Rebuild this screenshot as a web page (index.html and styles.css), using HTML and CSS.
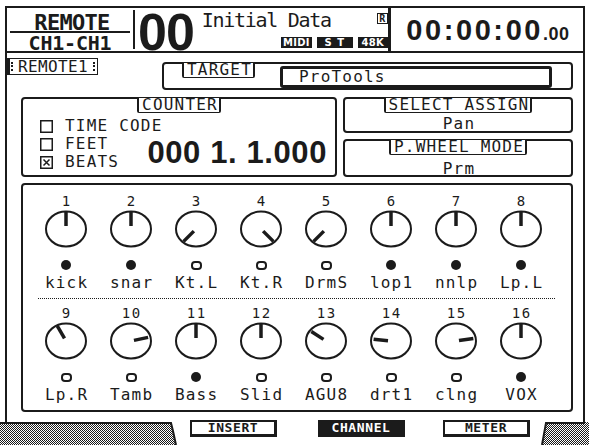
FILE: index.html
```html
<!DOCTYPE html>
<html lang="en">
<head>
<meta charset="utf-8">
<title>Remote – ProTools</title>
<link rel="stylesheet" href="styles.css">
</head>
<body>
<div class="screen">
  <header class="hdr">
    <div class="chsel">
      <div class="chsel-mode">REMOTE</div>
      <div class="chsel-range">CH1-CH1</div>
    </div>
    <div class="hdr-rule"></div>
    <div class="scene-num">00</div>
    <div class="scene-info">
      <div class="scene-line">
        <span class="scene-title">Initial Data</span>
        <span class="flag-r">R</span>
      </div>
      <div class="status">
        <span class="pill">MIDI</span>
        <span class="pill">S T</span>
        <span class="pill">48K</span>
      </div>
    </div>
    <div class="hdr-rule thick"></div>
    <div class="timecode">00:00:00<span class="frames">.00</span></div>
  </header>

  <main class="body">
    <div class="row-a">
      <div class="page-tag">REMOTE1</div>
      <section class="grp target">
        <span class="tag">TARGET</span>
        <div class="field">ProTools</div>
      </section>
    </div>

    <div class="row-b">
      <section class="grp counter">
        <span class="tag center">COUNTER</span>
        <div class="counter-body">
          <ul class="modes">
            <li><svg class="cb" viewBox="0 0 13 13" width="13" height="13"><rect x="0.75" y="0.75" width="11.5" height="11.5"/></svg>TIME CODE</li>
            <li><svg class="cb" viewBox="0 0 13 13" width="13" height="13"><rect x="0.75" y="0.75" width="11.5" height="11.5"/></svg>FEET</li>
            <li><svg class="cb" viewBox="0 0 13 13" width="13" height="13"><rect x="0.75" y="0.75" width="11.5" height="11.5"/><path d="M3.5 3.5 9.5 9.5M9.5 3.5 3.5 9.5"/></svg>BEATS</li>
          </ul>
          <div class="beats">000 1. 1.000</div>
        </div>
      </section>
      <div class="col-right">
        <section class="grp assign">
          <span class="tag center">SELECT ASSIGN</span>
          <div class="value">Pan</div>
        </section>
        <section class="grp wheel">
          <span class="tag center">P.WHEEL MODE</span>
          <div class="value">Prm</div>
        </section>
      </div>
    </div>

    <section class="grp channels">
      <div class="ch-row">
        <div class="ch"><div class="ch-num">1</div><svg class="knob" viewBox="0 0 44 40" width="44" height="40"><ellipse cx="22" cy="20" rx="20" ry="17.5"/><line x1="22" y1="17" x2="22" y2="2.5" transform="rotate(0 22 20)"/></svg><div class="ch-state"><span class="led"></span></div><div class="ch-name">kick</div></div>
        <div class="ch"><div class="ch-num">2</div><svg class="knob" viewBox="0 0 44 40" width="44" height="40"><ellipse cx="22" cy="20" rx="20" ry="17.5"/><line x1="22" y1="17" x2="22" y2="2.5" transform="rotate(0 22 20)"/></svg><div class="ch-state"><span class="led"></span></div><div class="ch-name">snar</div></div>
        <div class="ch"><div class="ch-num">3</div><svg class="knob" viewBox="0 0 44 40" width="44" height="40"><ellipse cx="22" cy="20" rx="20" ry="17.5"/><line x1="22" y1="17" x2="22" y2="2.5" transform="rotate(-135 22 20)"/></svg><div class="ch-state"><span class="led off"></span></div><div class="ch-name">Kt.L</div></div>
        <div class="ch"><div class="ch-num">4</div><svg class="knob" viewBox="0 0 44 40" width="44" height="40"><ellipse cx="22" cy="20" rx="20" ry="17.5"/><line x1="22" y1="17" x2="22" y2="2.5" transform="rotate(135 22 20)"/></svg><div class="ch-state"><span class="led off"></span></div><div class="ch-name">Kt.R</div></div>
        <div class="ch"><div class="ch-num">5</div><svg class="knob" viewBox="0 0 44 40" width="44" height="40"><ellipse cx="22" cy="20" rx="20" ry="17.5"/><line x1="22" y1="17" x2="22" y2="2.5" transform="rotate(-135 22 20)"/></svg><div class="ch-state"><span class="led off"></span></div><div class="ch-name">DrmS</div></div>
        <div class="ch"><div class="ch-num">6</div><svg class="knob" viewBox="0 0 44 40" width="44" height="40"><ellipse cx="22" cy="20" rx="20" ry="17.5"/><line x1="22" y1="17" x2="22" y2="2.5" transform="rotate(0 22 20)"/></svg><div class="ch-state"><span class="led"></span></div><div class="ch-name">lop1</div></div>
        <div class="ch"><div class="ch-num">7</div><svg class="knob" viewBox="0 0 44 40" width="44" height="40"><ellipse cx="22" cy="20" rx="20" ry="17.5"/><line x1="22" y1="17" x2="22" y2="2.5" transform="rotate(0 22 20)"/></svg><div class="ch-state"><span class="led"></span></div><div class="ch-name">nnlp</div></div>
        <div class="ch"><div class="ch-num">8</div><svg class="knob" viewBox="0 0 44 40" width="44" height="40"><ellipse cx="22" cy="20" rx="20" ry="17.5"/><line x1="22" y1="17" x2="22" y2="2.5" transform="rotate(0 22 20)"/></svg><div class="ch-state"><span class="led"></span></div><div class="ch-name">Lp.L</div></div>
      </div>
      <div class="ch-sep"></div>
      <div class="ch-row">
        <div class="ch"><div class="ch-num">9</div><svg class="knob" viewBox="0 0 44 40" width="44" height="40"><ellipse cx="22" cy="20" rx="20" ry="17.5"/><line x1="22" y1="17" x2="22" y2="2.5" transform="rotate(-30 22 20)"/></svg><div class="ch-state"><span class="led off"></span></div><div class="ch-name">Lp.R</div></div>
        <div class="ch"><div class="ch-num">10</div><svg class="knob" viewBox="0 0 44 40" width="44" height="40"><ellipse cx="22" cy="20" rx="20" ry="17.5"/><line x1="22" y1="17" x2="22" y2="2.5" transform="rotate(78 22 20)"/></svg><div class="ch-state"><span class="led off"></span></div><div class="ch-name">Tamb</div></div>
        <div class="ch"><div class="ch-num">11</div><svg class="knob" viewBox="0 0 44 40" width="44" height="40"><ellipse cx="22" cy="20" rx="20" ry="17.5"/><line x1="22" y1="17" x2="22" y2="2.5" transform="rotate(0 22 20)"/></svg><div class="ch-state"><span class="led"></span></div><div class="ch-name">Bass</div></div>
        <div class="ch"><div class="ch-num">12</div><svg class="knob" viewBox="0 0 44 40" width="44" height="40"><ellipse cx="22" cy="20" rx="20" ry="17.5"/><line x1="22" y1="17" x2="22" y2="2.5" transform="rotate(0 22 20)"/></svg><div class="ch-state"><span class="led off"></span></div><div class="ch-name">Slid</div></div>
        <div class="ch"><div class="ch-num">13</div><svg class="knob" viewBox="0 0 44 40" width="44" height="40"><ellipse cx="22" cy="20" rx="20" ry="17.5"/><line x1="22" y1="17" x2="22" y2="2.5" transform="rotate(-57 22 20)"/></svg><div class="ch-state"><span class="led off"></span></div><div class="ch-name">AGU8</div></div>
        <div class="ch"><div class="ch-num">14</div><svg class="knob" viewBox="0 0 44 40" width="44" height="40"><ellipse cx="22" cy="20" rx="20" ry="17.5"/><line x1="22" y1="17" x2="22" y2="2.5" transform="rotate(-84 22 20)"/></svg><div class="ch-state"><span class="led off"></span></div><div class="ch-name">drt1</div></div>
        <div class="ch"><div class="ch-num">15</div><svg class="knob" viewBox="0 0 44 40" width="44" height="40"><ellipse cx="22" cy="20" rx="20" ry="17.5"/><line x1="22" y1="17" x2="22" y2="2.5" transform="rotate(82 22 20)"/></svg><div class="ch-state"><span class="led off"></span></div><div class="ch-name">clng</div></div>
        <div class="ch"><div class="ch-num">16</div><svg class="knob" viewBox="0 0 44 40" width="44" height="40"><ellipse cx="22" cy="20" rx="20" ry="17.5"/><line x1="22" y1="17" x2="22" y2="2.5" transform="rotate(0 22 20)"/></svg><div class="ch-state"><span class="led"></span></div><div class="ch-name">VOX</div></div>
      </div>
    </section>
  </main>

  <footer class="tabs">
    <svg class="hatch hatch-l" viewBox="0 0 178 23" width="178" height="23">
      <defs>
        <pattern id="dots-l" width="2" height="2" patternUnits="userSpaceOnUse">
          <rect width="1" height="1" fill="#1b1b1b"/><rect x="1" y="1" width="1" height="1" fill="#1b1b1b"/>
        </pattern>
      </defs>
      <polygon points="0,0 171,0 173,9 176,23 0,23" fill="url(#dots-l)"/>
      <polyline points="0,1 171,1 173,9 176,23" fill="none" stroke="#1b1b1b" stroke-width="2"/>
    </svg>
    <div class="tab">INSERT</div>
    <div class="tab on">CHANNEL</div>
    <div class="tab">METER</div>
    <svg class="hatch hatch-r" viewBox="0 0 48 23" width="48" height="23">
      <defs>
        <pattern id="dots-r" width="2" height="2" patternUnits="userSpaceOnUse">
          <rect width="1" height="1" fill="#1b1b1b"/><rect x="1" y="1" width="1" height="1" fill="#1b1b1b"/>
        </pattern>
      </defs>
      <polygon points="5,0 48,0 48,23 1,23" fill="url(#dots-r)"/>
      <polyline points="1,23 5,1 44,1" fill="none" stroke="#1b1b1b" stroke-width="2"/>
    </svg>
  </footer>
</div>
</body>
</html>
```

FILE: styles.css
```css
* {
  box-sizing: border-box;
  margin: 0;
  padding: 0;
}

html,
body {
  width: 589px;
  height: 445px;
  overflow: hidden;
  background: #ffffff;
}

body {
  font-family: "DejaVu Sans Mono", monospace;
  color: #1b1b1b;
}

.screen {
  margin: 6px 0 0 5px;
  width: 580px;
  display: flex;
  flex-direction: column;
}

/* ---------- header bar ---------- */

.hdr {
  height: 47px;
  border: 2px solid #1b1b1b;
  display: flex;
}

.chsel {
  width: 126px;
  padding: 0 3px;
  display: flex;
  flex-direction: column;
}

.chsel-mode {
  height: 25px;
  border-bottom: 2px solid #1b1b1b;
  display: flex;
  align-items: flex-end;
  justify-content: center;
  font-weight: bold;
  font-size: 22px;
  line-height: 17px;
  letter-spacing: -0.7px;
  padding-left: 4px;
}

.chsel-range {
  height: 18px;
  display: flex;
  align-items: flex-end;
  justify-content: center;
  font-weight: bold;
  font-size: 20px;
  line-height: 15px;
  letter-spacing: -0.2px;
}

.hdr-rule {
  width: 2px;
  margin: 2px 0;
  background: #1b1b1b;
}

.hdr-rule.thick {
  width: 3px;
  margin: 0;
}

.scene-num {
  margin-left: 3px;
  height: 43px;
  font-family: "Liberation Sans", Arial, sans-serif;
  font-weight: bold;
  font-size: 52px;
  line-height: 48px;
  letter-spacing: -1px;
}

.scene-info {
  margin-left: 8px;
  width: 186px;
  display: flex;
  flex-direction: column;
}

.scene-line {
  height: 27px;
  display: flex;
  justify-content: space-between;
  align-items: flex-start;
}

.scene-title {
  font-size: 20px;
  line-height: 24px;
  letter-spacing: -1.3px;
}

.flag-r {
  margin-top: 5px;
  width: 11px;
  height: 11px;
  border: 1px solid #1b1b1b;
  font-size: 10px;
  line-height: 9px;
  font-weight: bold;
  text-align: center;
}

.status {
  display: flex;
  justify-content: flex-end;
  gap: 5px;
  margin-top: 2px;
}

.pill {
  height: 11px;
  padding: 0 2px;
  background: #1b1b1b;
  color: #ffffff;
  font-family: "DejaVu Sans", sans-serif;
  font-weight: bold;
  font-size: 10px;
  line-height: 11px;
  letter-spacing: 0.3px;
}

.pill:nth-child(1) { width: 31px; text-align: center; }
.pill:nth-child(2) { width: 36px; text-align: center; letter-spacing: 1px; }
.pill:nth-child(3) { width: 30px; text-align: center; }

.timecode {
  flex: 1;
  text-align: center;
  font-family: "Liberation Sans", Arial, sans-serif;
  font-weight: bold;
  font-size: 29px;
  line-height: 44px;
  letter-spacing: 2.6px;
  padding-left: 2px;
}

.frames {
  font-size: 18px;
  letter-spacing: 0.5px;
}

/* ---------- page body ---------- */

.body {
  height: 369px;
  border-left: 2px solid #1b1b1b;
  border-right: 2px solid #1b1b1b;
  padding-top: 5px;
  display: flex;
  flex-direction: column;
}

.row-a {
  height: 32px;
  display: flex;
  align-items: flex-start;
}

.page-tag {
  width: 91px;
  height: 17px;
  border: 1px solid #1b1b1b;
  border-left-width: 3px;
  display: flex;
  align-items: center;
  justify-content: space-between;
  padding: 0 2px 0 1px;
  font-size: 16px;
  line-height: 15px;
  letter-spacing: 0.4px;
}

.page-tag::before,
.page-tag::after {
  content: "";
  height: 9px;
  border-left: 2px dotted #1b1b1b;
}

.grp {
  border: 2px solid #1b1b1b;
  border-radius: 4px;
}

.tag {
  display: inline-block;
  height: 16px;
  margin-top: -2px;
  border: 1px solid #1b1b1b;
  border-left-width: 2px;
  border-right-width: 2px;
  border-radius: 2px;
  padding: 0 1px 0 3px;
  font-size: 16px;
  line-height: 14px;
  letter-spacing: 1.2px;
  background: #ffffff;
  white-space: nowrap;
}

.tag.center {
  display: block;
  width: max-content;
  margin-left: auto;
  margin-right: auto;
}

.target {
  margin-left: 64px;
  margin-top: 4px;
  width: 411px;
  height: 28px;
  display: flex;
  align-items: flex-start;
}

.target .tag {
  margin-left: 18px;
}

.field {
  margin-left: 25px;
  margin-top: 2px;
  width: 272px;
  height: 22px;
  border: 3px solid #1b1b1b;
  border-radius: 3px;
  padding-left: 16px;
  font-size: 16px;
  line-height: 16px;
  letter-spacing: 1.2px;
}

.row-b {
  margin-top: 7px;
  height: 80px;
  display: flex;
}

.counter {
  margin-left: 14px;
  width: 316px;
  height: 80px;
}

/* the mode list and the big readout share one cell, readout at the right */
.counter-body {
  display: grid;
  padding: 0 8px 0 17px;
}

.modes,
.beats {
  grid-area: 1 / 1;
}

.modes {
  list-style: none;
  margin-top: 4px;
  justify-self: start;
}

.modes li {
  height: 18px;
  display: flex;
  align-items: center;
  font-size: 16px;
  line-height: 18px;
  letter-spacing: 1.2px;
  white-space: nowrap;
}

.cb {
  flex: none;
  margin-right: 12px;
  fill: none;
  stroke: #1b1b1b;
  stroke-width: 1.5;
}

.beats {
  justify-self: end;
  margin-top: 25px;
  font-family: "Liberation Sans", Arial, sans-serif;
  font-weight: bold;
  font-size: 31px;
  line-height: 30px;
  letter-spacing: 0.6px;
  white-space: pre;
}

.col-right {
  margin-left: 6px;
  width: 230px;
  display: flex;
  flex-direction: column;
  gap: 6px;
}

.assign {
  height: 36px;
}

.wheel {
  height: 38px;
}

.value {
  text-align: center;
  font-size: 16px;
  line-height: 18px;
  letter-spacing: 1.2px;
  padding-left: 2px;
}

.assign .value {
  margin-top: 2px;
}

.wheel .value {
  margin-top: 5px;
}

/* ---------- channel knobs ---------- */

.channels {
  margin-top: 6px;
  margin-left: 14px;
  width: 552px;
  height: 229px;
  padding: 9px 0 0 10.5px;
}

.ch-row {
  display: grid;
  grid-template-columns: repeat(8, 65px);
}

.ch {
  display: flex;
  flex-direction: column;
  align-items: center;
}

.ch-num {
  height: 14px;
  font-size: 14px;
  line-height: 14px;
  letter-spacing: 1.4px;
  padding-left: 1.4px;
}

.knob {
  margin-top: 1px;
  display: block;
  fill: none;
  stroke: #1b1b1b;
}

.knob ellipse {
  stroke-width: 2;
}

.knob line {
  stroke-width: 3.5;
}

.ch-state {
  margin-top: 9px;
  height: 14px;
  display: flex;
  align-items: center;
  justify-content: center;
}

.led {
  width: 10px;
  height: 10px;
  border-radius: 50%;
  background: #1b1b1b;
}

.led.off {
  width: 11px;
  height: 9px;
  border: 2px solid #1b1b1b;
  border-radius: 4px;
  background: transparent;
}

.ch-name {
  margin-top: 3px;
  height: 16px;
  font-size: 16px;
  line-height: 16px;
  letter-spacing: 1.2px;
  padding-left: 1.2px;
  white-space: pre;
}

.ch-sep {
  margin: 7px 0 7px 4px;
  width: 517px;
  border-top: 1px dotted #1b1b1b;
}

/* ---------- bottom tab strip ---------- */

.tabs {
  margin-left: -5px;
  width: 589px;
  height: 23px;
  display: flex;
  align-items: flex-start;
}

.hatch {
  display: block;
  flex: none;
}

.tab {
  flex: none;
  width: 87px;
  height: 17px;
  margin-top: -2px;
  border: 2px solid #1b1b1b;
  border-right-width: 3px;
  border-bottom-width: 3px;
  background: #ffffff;
  text-align: center;
  font-weight: bold;
  font-size: 13px;
  line-height: 12px;
  letter-spacing: 0.6px;
}

.tab:nth-of-type(1) { margin-left: 12px; }
.tab:nth-of-type(2) { margin-left: 41px; }
.tab:nth-of-type(3) { margin-left: 38px; }

.tab.on {
  background: #1b1b1b;
  color: #ffffff;
}

.hatch-r {
  margin-left: 11px;
}
```
